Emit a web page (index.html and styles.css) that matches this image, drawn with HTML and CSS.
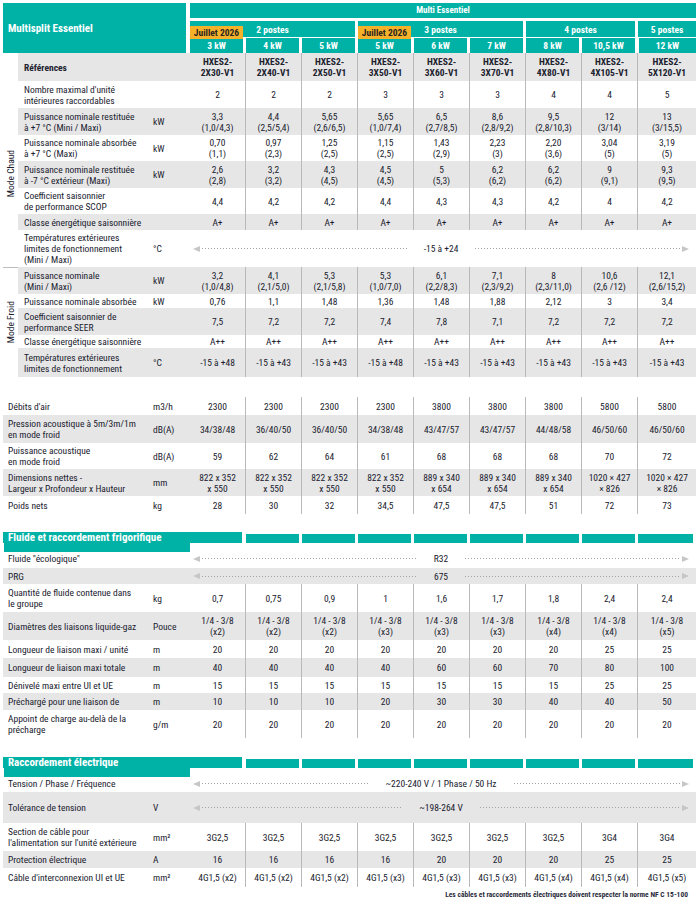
FILE: index.html
```html
<!DOCTYPE html>
<html lang="fr">
<head>
<meta charset="utf-8">
<title>Multisplit Essentiel</title>
<link rel="stylesheet" href="styles.css">
</head>
<body>
<div class="page">
  <div class="head">
    <div class="h-title">Multisplit Essentiel</div>
    <div class="h-bar">Multi Essentiel</div>
    <div class="h-grp g2">2 postes</div>
    <div class="h-grp g3">3 postes</div>
    <div class="h-grp g4">4 postes</div>
    <div class="h-grp g5">5 postes</div>
    <div class="h-kw"><span class="badge">Juillet 2026</span>3 kW</div>
    <div class="h-kw">4 kW</div>
    <div class="h-kw">5 kW</div>
    <div class="h-kw"><span class="badge">Juillet 2026</span>5 kW</div>
    <div class="h-kw">6 kW</div>
    <div class="h-kw">7 kW</div>
    <div class="h-kw">8 kW</div>
    <div class="h-kw">10,5 kW</div>
    <div class="h-kw last">12 kW</div>
  </div>

  <div class="modes">
    <div class="row a g r28 ref">
      <div class="l">Références</div><div class="u"></div>
      <div class="v">HXES2-<br>2X30-V1</div><div class="v">HXES2-<br>2X40-V1</div><div class="v">HXES2-<br>2X50-V1</div>
      <div class="v">HXES2-<br>3X50-V1</div><div class="v">HXES2-<br>3X60-V1</div><div class="v">HXES2-<br>3X70-V1</div>
      <div class="v">HXES2-<br>4X80-V1</div><div class="v">HXES2-<br>4X105-V1</div><div class="v">HXES2-<br>5X120-V1</div>
    </div>

    <div class="grp">
      <div class="strip"><span>Mode Chaud</span></div>
      <div class="rows">
        <div class="row a r27">
          <div class="l">Nombre maximal d'unité<br>intérieures raccordables</div><div class="u"></div>
          <div class="v">2</div><div class="v">2</div><div class="v">2</div><div class="v">3</div><div class="v">3</div><div class="v">3</div><div class="v">4</div><div class="v">4</div><div class="v">5</div>
        </div>
        <div class="row a g r27">
          <div class="l">Puissance nominale restituée<br>à +7 °C (Mini / Maxi)</div><div class="u">kW</div>
          <div class="v">3,3<br>(1,0/4,3)</div><div class="v">4,4<br>(2,5/5,4)</div><div class="v">5,65<br>(2,6/6,5)</div>
          <div class="v">5,65<br>(1,0/7,4)</div><div class="v">6,5<br>(2,7/8,5)</div><div class="v">8,6<br>(2,8/9,2)</div>
          <div class="v">9,5<br>(2,8/10,3)</div><div class="v">12<br>(3/14)</div><div class="v">13<br>(3/15,5)</div>
        </div>
        <div class="row a r26">
          <div class="l">Puissance nominale absorbée<br>à +7 °C (Maxi)</div><div class="u">kW</div>
          <div class="v">0,70<br>(1,1)</div><div class="v">0,97<br>(2,3)</div><div class="v">1,25<br>(2,5)</div>
          <div class="v">1,15<br>(2,5)</div><div class="v">1,43<br>(2,9)</div><div class="v">2,23<br>(3)</div>
          <div class="v">2,20<br>(3,6)</div><div class="v">3,04<br>(5)</div><div class="v">3,19<br>(5)</div>
        </div>
        <div class="row a g r27">
          <div class="l">Puissance nominale restituée<br>à -7 °C extérieur (Maxi)</div><div class="u">kW</div>
          <div class="v">2,6<br>(2,8)</div><div class="v">3,2<br>(3,2)</div><div class="v">4,3<br>(4,5)</div>
          <div class="v">4,5<br>(4,5)</div><div class="v">5<br>(5,3)</div><div class="v">6,2<br>(6,2)</div>
          <div class="v">6,2<br>(6,2)</div><div class="v">9<br>(9,1)</div><div class="v">9,3<br>(9,5)</div>
        </div>
        <div class="row a r26">
          <div class="l">Coefficient saisonnier<br>de performance SCOP</div><div class="u"></div>
          <div class="v">4,4</div><div class="v">4,2</div><div class="v">4,2</div><div class="v">4,4</div><div class="v">4,3</div><div class="v">4,3</div><div class="v">4,2</div><div class="v">4</div><div class="v">4,2</div>
        </div>
        <div class="row a g r16">
          <div class="l">Classe énergétique saisonnière</div><div class="u"></div>
          <div class="v">A+</div><div class="v">A+</div><div class="v">A+</div><div class="v">A+</div><div class="v">A+</div><div class="v">A+</div><div class="v">A+</div><div class="v">A+</div><div class="v">A+</div>
        </div>
        <div class="row a r37">
          <div class="l">Températures extérieures<br>limites de fonctionnement<br>(Mini / Maxi)</div><div class="u">°C</div>
          <div class="sp"><i class="tl"></i><i class="dot"></i><span class="spt">-15 à +24</span><i class="dot"></i><i class="tr"></i></div>
        </div>
      </div>
    </div>

    <div class="grp froid">
      <div class="strip"><span>Mode Froid</span></div>
      <div class="rows">
        <div class="row a g r27">
          <div class="l">Puissance nominale<br>(Mini / Maxi)</div><div class="u">kW</div>
          <div class="v">3,2<br>(1,0/4,8)</div><div class="v">4,1<br>(2,1/5,0)</div><div class="v">5,3<br>(2,1/5,8)</div>
          <div class="v">5,3<br>(1,0/7,0)</div><div class="v">6,1<br>(2,2/8,3)</div><div class="v">7,1<br>(2,3/9,2)</div>
          <div class="v">8<br>(2,3/11,0)</div><div class="v">10,6<br>(2,6 /12)</div><div class="v">12,1<br>(2,6/15,2)</div>
        </div>
        <div class="row a r14">
          <div class="l">Puissance nominale absorbée</div><div class="u">kW</div>
          <div class="v">0,76</div><div class="v">1,1</div><div class="v">1,48</div><div class="v">1,36</div><div class="v">1,48</div><div class="v">1,88</div><div class="v">2,12</div><div class="v">3</div><div class="v">3,4</div>
        </div>
        <div class="row a g r27">
          <div class="l">Coefficient saisonnier de<br>performance SEER</div><div class="u"></div>
          <div class="v">7,5</div><div class="v">7,2</div><div class="v">7,2</div><div class="v">7,4</div><div class="v">7,8</div><div class="v">7,1</div><div class="v">7,2</div><div class="v">7,2</div><div class="v">7,2</div>
        </div>
        <div class="row a r13">
          <div class="l">Classe énergétique saisonnière</div><div class="u"></div>
          <div class="v">A++</div><div class="v">A++</div><div class="v">A++</div><div class="v">A++</div><div class="v">A++</div><div class="v">A++</div><div class="v">A++</div><div class="v">A++</div><div class="v">A++</div>
        </div>
        <div class="row a g r29">
          <div class="l">Températures extérieures<br>limites de fonctionnement</div><div class="u">°C</div>
          <div class="v">-15 à +48</div><div class="v">-15 à +43</div><div class="v">-15 à +43</div><div class="v">-15 à +48</div><div class="v">-15 à +43</div><div class="v">-15 à +43</div><div class="v">-15 à +43</div><div class="v">-15 à +43</div><div class="v">-15 à +43</div>
        </div>
      </div>
    </div>
  </div>

  <div class="sec air">
    <div class="row b r18">
      <div class="l">Débits d'air</div><div class="u">m3/h</div>
      <div class="v">2300</div><div class="v">2300</div><div class="v">2300</div><div class="v">2300</div><div class="v">3800</div><div class="v">3800</div><div class="v">3800</div><div class="v">5800</div><div class="v">5800</div>
    </div>
    <div class="row b g r28">
      <div class="l">Pression acoustique à 5m/3m/1m<br>en mode froid</div><div class="u">dB(A)</div>
      <div class="v">34/38/48</div><div class="v">36/40/50</div><div class="v">36/40/50</div><div class="v">34/38/48</div><div class="v">43/47/57</div><div class="v">43/47/57</div><div class="v">44/48/58</div><div class="v">46/50/60</div><div class="v">46/50/60</div>
    </div>
    <div class="row b r26">
      <div class="l">Puissance acoustique<br>en mode froid</div><div class="u">dB(A)</div>
      <div class="v">59</div><div class="v">62</div><div class="v">64</div><div class="v">61</div><div class="v">68</div><div class="v">68</div><div class="v">68</div><div class="v">70</div><div class="v">72</div>
    </div>
    <div class="row b g r27">
      <div class="l">Dimensions nettes -<br>Largeur x Profondeur x Hauteur</div><div class="u">mm</div>
      <div class="v">822 x 352<br>x 550</div><div class="v">822 x 352<br>x 550</div><div class="v">822 x 352<br>x 550</div><div class="v">822 x 352<br>x 550</div>
      <div class="v">889 x 340<br>x 654</div><div class="v">889 x 340<br>x 654</div><div class="v">889 x 340<br>x 654</div>
      <div class="v">1020 × 427<br>× 826</div><div class="v">1020 × 427<br>× 826</div>
    </div>
    <div class="row b r18">
      <div class="l">Poids nets</div><div class="u">kg</div>
      <div class="v">28</div><div class="v">30</div><div class="v">32</div><div class="v">34,5</div><div class="v">47,5</div><div class="v">47,5</div><div class="v">51</div><div class="v">72</div><div class="v">73</div>
    </div>
  </div>

  <div class="sec fluide">
    <div class="shead r17">
      <div class="st">Fluide et raccordement frigorifique</div>
      <i class="sb"></i><i class="sb"></i><i class="sb"></i><i class="sb"></i><i class="sb"></i><i class="sb"></i><i class="sb"></i><i class="sb"></i><i class="sb"></i>
    </div>
    <div class="row b r19">
      <div class="l">Fluide "écologique"</div><div class="u"></div>
      <div class="sp"><i class="tl"></i><i class="dot"></i><span class="spt">R32</span><i class="dot"></i><i class="tr"></i></div>
    </div>
    <div class="row b g r16">
      <div class="l">PRG</div><div class="u"></div>
      <div class="sp"><i class="tl"></i><i class="dot"></i><span class="spt">675</span><i class="dot"></i><i class="tr"></i></div>
    </div>
    <div class="row b r28">
      <div class="l">Quantité de fluide contenue dans<br>le groupe</div><div class="u">kg</div>
      <div class="v">0,7</div><div class="v">0,75</div><div class="v">0,9</div><div class="v">1</div><div class="v">1,6</div><div class="v">1,7</div><div class="v">1,8</div><div class="v">2,4</div><div class="v">2,4</div>
    </div>
    <div class="row b g r28">
      <div class="l">Diamètres des liaisons liquide-gaz</div><div class="u">Pouce</div>
      <div class="v">1/4 - 3/8<br>(x2)</div><div class="v">1/4 - 3/8<br>(x2)</div><div class="v">1/4 - 3/8<br>(x2)</div>
      <div class="v">1/4 - 3/8<br>(x3)</div><div class="v">1/4 - 3/8<br>(x3)</div><div class="v">1/4 - 3/8<br>(x3)</div>
      <div class="v">1/4 - 3/8<br>(x4)</div><div class="v">1/4 - 3/8<br>(x4)</div><div class="v">1/4 - 3/8<br>(x5)</div>
    </div>
    <div class="row b r18">
      <div class="l">Longueur de liaison maxi / unité</div><div class="u">m</div>
      <div class="v">20</div><div class="v">20</div><div class="v">20</div><div class="v">20</div><div class="v">20</div><div class="v">20</div><div class="v">20</div><div class="v">25</div><div class="v">25</div>
    </div>
    <div class="row b g r19">
      <div class="l">Longueur de liaison maxi totale</div><div class="u">m</div>
      <div class="v">40</div><div class="v">40</div><div class="v">40</div><div class="v">40</div><div class="v">60</div><div class="v">60</div><div class="v">70</div><div class="v">80</div><div class="v">100</div>
    </div>
    <div class="row b r16">
      <div class="l">Dénivelé maxi entre UI et UE</div><div class="u">m</div>
      <div class="v">15</div><div class="v">15</div><div class="v">15</div><div class="v">15</div><div class="v">15</div><div class="v">15</div><div class="v">15</div><div class="v">25</div><div class="v">25</div>
    </div>
    <div class="row b g r17">
      <div class="l">Préchargé pour une liaison de</div><div class="u">m</div>
      <div class="v">10</div><div class="v">10</div><div class="v">10</div><div class="v">20</div><div class="v">30</div><div class="v">30</div><div class="v">40</div><div class="v">40</div><div class="v">50</div>
    </div>
    <div class="row b r28">
      <div class="l">Appoint de charge au-delà de la<br>précharge</div><div class="u">g/m</div>
      <div class="v">20</div><div class="v">20</div><div class="v">20</div><div class="v">20</div><div class="v">20</div><div class="v">20</div><div class="v">20</div><div class="v">20</div><div class="v">20</div>
    </div>
  </div>

  <div class="sec elec">
    <div class="shead r18">
      <div class="st">Raccordement électrique</div>
      <i class="sb"></i><i class="sb"></i><i class="sb"></i><i class="sb"></i><i class="sb"></i><i class="sb"></i><i class="sb"></i><i class="sb"></i><i class="sb"></i>
    </div>
    <div class="row b r17">
      <div class="l">Tension / Phase / Fréquence</div><div class="u"></div>
      <div class="sp"><i class="tl"></i><i class="dot"></i><span class="spt">~220-240 V / 1 Phase / 50 Hz</span><i class="dot"></i><i class="tr"></i></div>
    </div>
    <div class="row b g r31">
      <div class="l">Tolérance de tension</div><div class="u">V</div>
      <div class="sp"><i class="tl"></i><i class="dot"></i><span class="spt">~198-264 V</span><i class="dot"></i><i class="tr"></i></div>
    </div>
    <div class="row b r28">
      <div class="l">Section de câble pour<br>l'alimentation sur l'unité extérieure</div><div class="u">mm²</div>
      <div class="v">3G2,5</div><div class="v">3G2,5</div><div class="v">3G2,5</div><div class="v">3G2,5</div><div class="v">3G2,5</div><div class="v">3G2,5</div><div class="v">3G2,5</div><div class="v">3G4</div><div class="v">3G4</div>
    </div>
    <div class="row b g r17">
      <div class="l">Protection électrique</div><div class="u">A</div>
      <div class="v">16</div><div class="v">16</div><div class="v">16</div><div class="v">16</div><div class="v">20</div><div class="v">20</div><div class="v">20</div><div class="v">25</div><div class="v">25</div>
    </div>
    <div class="row b r19">
      <div class="l">Câble d'interconnexion UI et UE</div><div class="u">mm²</div>
      <div class="v">4G1,5 (x2)</div><div class="v">4G1,5 (x2)</div><div class="v">4G1,5 (x2)</div><div class="v">4G1,5 (x3)</div><div class="v">4G1,5 (x3)</div><div class="v">4G1,5 (x3)</div><div class="v">4G1,5 (x4)</div><div class="v">4G1,5 (x4)</div><div class="v">4G1,5 (x5)</div>
    </div>
  </div>

  <p class="note">Les câbles et raccordements électriques doivent respecter la norme NF C 15-100</p>
</div>
</body>
</html>
```

FILE: styles.css
```css
* { box-sizing: border-box; }

body {
  margin: 0;
  background: #ffffff;
  color: #20212e;
  font-family: "Roboto Condensed", "Liberation Sans Narrow", "Arial Narrow", "DejaVu Sans Condensed", Roboto, sans-serif;
  font-size: 9.5px;
  line-height: 11px;
}

.page {
  width: 696px;
  padding-top: 3px;
}

/* ---------- top header ---------- */
.head {
  display: grid;
  grid-template-columns: 187px repeat(8, 56px) 58px;
  grid-template-rows: 15px 3px 16px 1px 15px;
  margin-left: 3px;
  color: #ffffff;
  font-weight: 700;
}
.head > div {
  background: #00b2a6;
  display: flex;
  align-items: center;
  justify-content: center;
}
.h-title {
  grid-column: 1;
  grid-row: 1 / -1;
  margin-right: 4px;
  justify-content: flex-start !important;
  padding-left: 5px;
  font-size: 11px;
}
.h-bar {
  grid-column: 2 / -1;
  grid-row: 1;
  font-size: 9px;
}
.h-grp {
  grid-row: 3;
  margin-right: 3px;
  font-size: 9.5px;
}
.g2 { grid-column: 2 / 5; }
.g3 { grid-column: 5 / 8; }
.g4 { grid-column: 8 / 10; }
.g5 { grid-column: 10 / 11; margin-right: 0; }
.h-kw {
  grid-row: 5;
  margin-right: 3px;
  position: relative;
  font-size: 9.5px;
}
.h-kw.last { margin-right: 0; margin-left: 1px; }
.badge {
  position: absolute;
  left: 0;
  right: 0;
  top: -12px;
  height: 13px;
  background: #f6b12a;
  color: #2a2620;
  font-size: 9.5px;
  display: flex;
  align-items: center;
  justify-content: center;
}

/* ---------- rows ---------- */
.modes { margin-left: 3px; }
.ref { margin-left: 15px; }
.ref .l, .ref .v { font-weight: 700; }

.grp { display: flex; }
.strip {
  width: 15px;
  flex: none;
  display: flex;
  align-items: center;
  justify-content: center;
}
.strip span {
  writing-mode: vertical-rl;
  transform: rotate(180deg);
  white-space: nowrap;
  font-size: 9.5px;
}
.froid .strip { border-top: 1px solid #bdbdbd; }
.rows { flex: 1; }

.row { display: grid; }
.row.a { grid-template-columns: 132px 40px repeat(8, 56px) 58px; }
.row.b { grid-template-columns: 147px 40px repeat(8, 56px) 58px; }
.sec { margin-left: 3px; }
.row.g { background: #e6e6e6; }
.row > div {
  display: flex;
  align-items: center;
}
.l {
  padding-left: 6px;
  white-space: nowrap;
}
.row.b .l { padding-left: 5px; }
.u { padding-left: 3px; }
.v {
  justify-content: center;
  text-align: center;
  white-space: nowrap;
  border-right: 1px solid #b9b9b9;
}
.v:last-child { border-right: 0; }

.sp {
  grid-column: 3 / -1;
  padding: 0 7px 0 3px;
}
.spt { padding: 0 17px; white-space: nowrap; }
.dot {
  flex: 1;
  height: 1px;
  background: repeating-linear-gradient(90deg, #a3a3a3 0 1px, transparent 1px 3px);
}
.tl, .tr {
  width: 0;
  height: 0;
  border-top: 3px solid transparent;
  border-bottom: 3px solid transparent;
}
.tl { border-right: 7px solid #c6c6c6; margin-right: 2px; }
.tr { border-left: 7px solid #c6c6c6; margin-left: 2px; }

/* row heights */
.r13 { height: 13px; }
.r14 { height: 14px; }
.r16 { height: 16px; }
.r17 { height: 17px; }
.r18 { height: 18px; }
.r19 { height: 19px; }
.r26 { height: 26px; }
.r27 { height: 27px; }
.r28 { height: 28px; }
.r29 { height: 29px; }
.r31 { height: 31px; }
.r37 { height: 37px; }

/* section spacing */
.air { margin-top: 20px; }
.fluide { margin-top: 18px; }
.elec { margin-top: 19px; }

/* section headers */
.shead {
  display: grid;
  grid-template-columns: 187px repeat(8, 56px) 58px;
}
.st {
  grid-column: 1 / 3;
  margin-right: 4px;
  background: #00b2a6;
  color: #ffffff;
  font-weight: 700;
  font-size: 11px;
  padding-left: 5px;
  display: flex;
  align-items: center;
}
.sb {
  align-self: end;
  height: 9px;
  background: #00b2a6;
  margin-right: 3px;
}
.sb:last-child { margin-right: 0; margin-left: 1px; }

.note {
  margin: 3px 0 0;
  padding-right: 8px;
  text-align: right;
  font-size: 7.5px;
  line-height: 10px;
  font-weight: 700;
  color: #2b2c3c;
}
```
